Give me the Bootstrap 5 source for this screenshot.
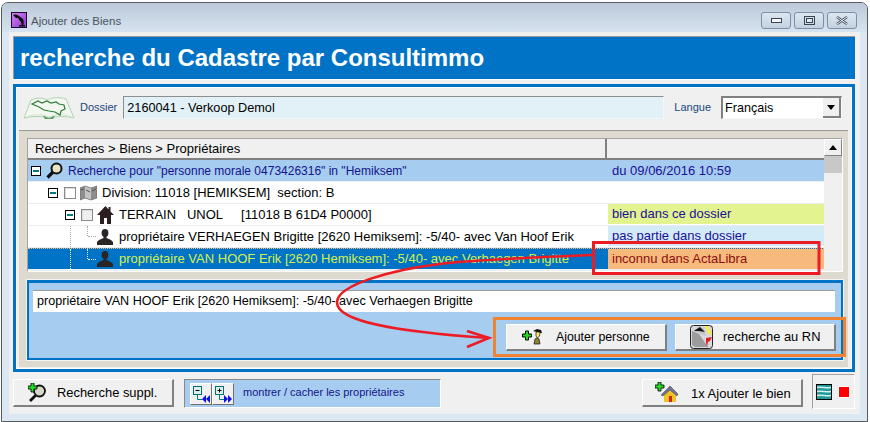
<!DOCTYPE html>
<html lang="fr"><head><meta charset="utf-8"><title>Ajouter des Biens</title>
<link href="https://cdn.jsdelivr.net/npm/bootstrap@5.3.0/dist/css/bootstrap.min.css" rel="stylesheet">
<style>
html,body{margin:0;height:422px;overflow:hidden;background:#fff}
body{font-family:"Liberation Sans",Arial,sans-serif;font-size:13px;color:#000;position:relative}
.win{margin:2px 2px 0 1px;height:420px;border:1px solid #5a5a5a;border-radius:7px 7px 0 0;background:#dbe7f3;padding:0 7px 7px 7px}
.wintitle{height:29px;margin:0 -7px;padding:0 10px 0 9px;background:linear-gradient(#bbc9d9,#d7e3f0);border-radius:6px 6px 0 0}
.wintitle .ttl{font-size:11.5px;color:#4a5560;margin:10px 0 0 4px}
.capbtn{width:30px;height:17px;border:1px solid #7d8ea5;border-radius:3px;background:linear-gradient(#dde7f1,#c3d1e0)}
.capwrap{margin-top:9px;gap:3px}
.client{height:382px;background:#f0f0f0;padding:4px 5px 0 4px}
.hdr{height:43px;background:#0073c6;border-top:1px solid #9a9a9a;border-left:1px solid #9a9a9a;color:#fff;font-size:24px;font-weight:700;padding:0 6px;line-height:42px;box-shadow:0 1px 0 #fff}
.mainp{height:288px;margin-top:5px;border:3px solid #0073c6;outline:1px solid #fff;outline-offset:-4px;background:#f0f0f0;padding:1px 4px 0 3px}
.dosrow{height:42px;padding:8px 0 11px 4px}
.lbl{font-size:11px;color:#18487c;flex:none}
.dosin{width:541px;height:23px;flex:none;background:#e2f0f8;border:1px solid #eef7fb;border-top-color:#8e8e8e;border-left-color:#8e8e8e;font-size:12.7px;line-height:23px;padding-left:3px;margin-left:6px}
.sel{width:121px;height:23px;flex:none;margin-left:10px;background:#fff;border:1px solid #808080;border-top-width:2px;border-left-width:2px;border-right-color:#f8f8f8;border-bottom-color:#f8f8f8;font-size:12.6px;line-height:21px;padding-left:2px}
.selbtn{width:18px;height:20px;background:#f0f0f0;border-right:2px solid #808080;border-bottom:2px solid #808080}
.selbtn i{border-left:4px solid transparent;border-right:4px solid transparent;border-top:5px solid #000}
.tan{height:237px;background:#dfdad0;border-top:1px solid #9a9a9a;padding:7px 5px 0 8px}
.gridbox{height:134px;background:#f0f0f0;border:1px solid #a4a4a4;border-right-color:#fff;border-bottom-color:#fff;position:relative}
.treecol{width:796px;flex:none}
.ghead{height:21px;background:#f0f0f0;border-bottom:2px solid #808080;line-height:19px;font-size:13px}
.gh1{width:579px;padding-left:7px;border-right:2px solid #808080}
.sb{width:18px;flex:none;background:#f0f0f0}
.sbup{height:17px;background:#f0f0f0;border:1px solid #fff;border-right-color:#808080;border-bottom-color:#808080}
.sbup i{border-left:4px solid transparent;border-right:4px solid transparent;border-bottom:5px solid #000}
.sbthumb{height:17px;background:#c8c8c8}
.gr{height:22px;line-height:20px;font-size:13px;border-bottom:1px solid #ececec;background:#fff;white-space:nowrap;position:relative}
.gmain{width:580px;overflow:hidden;flex:none}
.gstat{width:216px;flex:none;padding-left:4px;margin:0 1px 1px 0;height:20px;line-height:19px;color:#1a0f96;font-size:13px}
.r0{background:#a6ccf0;color:#14148c;border-bottom:0;margin-bottom:1px;height:21px}
.r0 .fs{font-size:12px}
.rsel{background:#0073c6;color:#d6f04a;border-bottom:0;height:21px;border-top:1px dotted #f7b97c}
.r0 .gstat{margin:0}
.st1{background:#e3f38f}.st2{background:#d2ebf6}.st3{background:#f7b97c;color:#8c1010}
.exp{width:10px;height:10px;border:1px solid #000;background:#fff;flex:none;position:relative}
.exp::after{content:"";position:absolute;left:1px;right:1px;top:3px;height:2px;background:#007c80}
.chk{width:12px;height:12px;border:1px solid #8a8a8a;background:#fff;flex:none;margin:0 4px 0 6px;box-shadow:inset 1px 1px 0 #ddd}
.chk2{background:#efefef}
.ind0{padding-left:3px}.ind1{padding-left:20px}.ind2{padding-left:37px}.ind3{padding-left:69px}
.ico{flex:none;margin-right:6px}
.ico5{flex:none;margin-right:5px}
.sub{height:80px;margin-top:8px;width:816px;border:2px solid #0073c6;border-top-width:3px;background:#a6ccf0;box-shadow:0 0 0 1px #f4f4f4;padding:7px 6px 0 4px}
.subin{height:22px;background:#fff;border-top:1px solid #9a9a9a;font-size:12.6px;line-height:21px;padding-left:4px}
.orange{width:353px;height:40px;margin:5px -11px 0 auto;border:3px solid #f08232;padding:4px 7px 0 10px;gap:8px}
.wb{height:27px;width:161px;flex:none;border:1px solid #fff;border-right:2px solid #808080;border-bottom:2px solid #808080;background:#f0f0f0;font-size:13px;color:#000;padding:0 0 0 14px;white-space:nowrap;line-height:1}
.wb svg{flex:none}
.wb span{padding-top:1px}
.wb .t1{font-size:12.3px;margin-left:14px}
.wb .t2{margin-left:10px;font-size:12.9px}
.foot{height:35px;padding-top:7px}
.wb.big{height:28px}
.showp{width:257px;height:29px;flex:none;margin-left:10px;background:#a6ccf0;border:1px solid #fff;border-left-color:#8a8a8a;border-top-color:#8a8a8a;font-size:11px;color:#14148c;padding-left:5px}
.mini{width:22px;height:22px;background:#f0f0f0;border:1px solid #fff;border-right:1px solid #707070;border-bottom:1px solid #707070;flex:none}
.showp .cap{margin-left:9px;margin-top:-2px}
.tiny{width:43px;height:35px;flex:none;margin:-5px 0 0 9px;border:1px solid #fff;border-left-color:#a0a0a0;border-top-color:#a0a0a0;padding-left:3px;gap:6px}
.tiny .sq{width:12px;height:12px;background:#f00;border:1px solid #fff;flex:none}
.ann{position:absolute;left:0;top:0;pointer-events:none}
.dots{position:absolute;border-left:1px dotted #a8a8a8}
.doth{position:absolute;border-top:1px dotted #a8a8a8;height:0}
.rsel .dots,.rsel .doth{border-color:#fff}
</style></head><body>
<div class="win">
 <div class="wintitle d-flex align-items-start">
  <svg width="16" height="16" viewBox="0 0 16 16" class="flex-none" style="margin-top:9px"><defs><linearGradient id="pg" x1="0" y1="0" x2="1" y2="1"><stop offset="0" stop-color="#d88cf0"/><stop offset="1" stop-color="#8a2fd0"/></linearGradient></defs><rect width="16" height="16" fill="url(#pg)"/><rect x=".5" y=".5" width="15" height="15" fill="none" stroke="#1a0a30"/><path d="M2 3c2-1 5 0 6 1l4 3c1 2 1 5 0 7l-1 1c-1-2 0-5-2-6L7 6H5z" fill="#101010"/><path d="M8 13h6v1.500H8z" fill="#101010"/></svg>
  <span class="ttl">Ajouter des Biens</span>
  <div class="ms-auto d-flex capwrap">
   <div class="capbtn d-flex align-items-center justify-content-center"><svg width="11" height="7"><rect x=".5" y="1.500" width="10" height="4" fill="#f4f6f8" stroke="#3c4652"/></svg></div>
   <div class="capbtn d-flex align-items-center justify-content-center"><svg width="11" height="9"><rect x=".5" y=".5" width="10" height="8" fill="none" stroke="#3c4652"/><rect x="2.500" y="2.500" width="6" height="4" fill="#dfe7ef" stroke="#3c4652"/></svg></div>
   <div class="capbtn d-flex align-items-center justify-content-center"><svg width="12" height="9"><path d="M1 1l10 7M11 1L1 8" stroke="#3c4652" stroke-width="2.400"/><path d="M1 1l10 7M11 1L1 8" stroke="#f0f4f8" stroke-width="1"/></svg></div>
  </div>
 </div>
 <div class="client">
  <div class="hdr">recherche du Cadastre par Consultimmo</div>
  <div class="mainp">
   <div class="dosrow d-flex align-items-center">
    <svg width="52" height="25" viewBox="0 0 52 25" class="flex-none" style="margin-right:5px"><path d="M1 23L8 5c5-2 11-3 16 0 6-3 13-3 19-1l8 19c-8-2-17-2-24 0-8-2-18-2-26 0z" fill="#f2f8f0" stroke="#b4d0b4"/><path d="M4 22c7-3 15-3 22 0 7-3 15-3 22 0" fill="none" stroke="#cfe2cf"/><path d="M9 9l6-3 4 2 5-2 4 2 5-1 3 2 5 1 1 4-4 2-1 4-5-3-6-1-5-1-5-3z" fill="#f2f8f0" stroke="#2f7d38" stroke-width="1.200"/><path d="M20 21c3 0 4 2 6 2s3-2 6-2l-2 3h-8z" fill="#5f9f66"/></svg>
    <span class="lbl">Dossier</span>
    <div class="dosin">2160041 - Verkoop Demol</div>
    <span class="lbl" style="margin-left:10px">Langue</span>
    <div class="sel d-flex justify-content-between">Français<div class="selbtn d-flex align-items-center justify-content-center"><i></i></div></div>
   </div>
   <div class="tan">
    <div class="gridbox d-flex">
     <div class="treecol">
      <div class="ghead d-flex"><div class="gh1">Recherches &gt; Biens &gt; Propriétaires</div></div>
      <div class="gr r0 d-flex align-items-center"><div class="gmain d-flex align-items-center ind0"><span class="exp" style="margin-right:5px"></span><svg width="17" height="17" viewBox="0 0 17 17" class="flex-none" style="margin-right:5px"><circle cx="10.500" cy="6.500" r="5" fill="#e9e4c4" stroke="#111" stroke-width="2"/><path d="M7 10l-5.500 5.500" stroke="#111" stroke-width="3.200"/></svg><span class="fs">Recherche pour "personne morale 0473426316" in "Hemiksem"</span></div><div class="gstat">du 09/06/2016 10:59</div></div>
      <div class="gr d-flex align-items-center"><div class="gmain d-flex align-items-center ind1"><span class="exp"></span><span class="chk"></span><svg width="17" height="16" viewBox="0 0 17 16" class="ico5"><path d="M0 3l5-2 6 2 6-2v12l-6 2-6-2-5 2z" fill="#8e8e8e"/><path d="M5 1v12l6 2V3z" fill="#c4c4c4"/><path d="M1 5l3-1M12 6l4-2M6 5l4 2" stroke="#4e4e4e"/><path d="M0 3l5-2 6 2 6-2v12l-6 2-6-2-5 2z" fill="none" stroke="#5a5a5a" stroke-width=".6"/></svg><span>Division: 11018 [HEMIKSEM]&nbsp; section: B</span></div></div>
      <div class="gr d-flex align-items-center"><div class="gmain d-flex align-items-center ind2"><span class="exp"></span><span class="chk chk2"></span><svg width="17" height="18" viewBox="0 0 17 18" class="ico5"><path d="M8.500 0L0 9h3v9h4v-6h3v6h4V9h3l-3.500-3.500V1h-2v2.500z" fill="#2a1e1e"/></svg><span>TERRAIN&nbsp;&nbsp; UNOL&nbsp;&nbsp;&nbsp;&nbsp; [11018 B 61D4 P0000]</span></div><div class="gstat st1">bien dans ce dossier</div></div>
      <div class="gr d-flex align-items-center"><span class="dots" style="left:42px;top:0;height:21px"></span><span class="dots" style="left:59px;top:0;height:10px"></span><span class="doth" style="left:60px;top:10px;width:8px"></span><div class="gmain d-flex align-items-center ind3"><svg width="16" height="16" viewBox="0 0 16 16" class="ico"><ellipse cx="8" cy="4" rx="3.400" ry="4" fill="#2a2626"/><path d="M6.500 7h3v2l4.500 2 2 2v3H0v-3l2-2 4.500-2z" fill="#2a2626"/></svg><span>propriétaire VERHAEGEN Brigitte [2620 Hemiksem]: -5/40- avec Van Hoof Erik</span></div><div class="gstat st2">pas partie dans dossier</div></div>
      <div class="gr rsel d-flex align-items-center"><span class="dots" style="left:42px;top:0;height:20px"></span><span class="dots" style="left:59px;top:0;height:10px"></span><span class="doth" style="left:60px;top:10px;width:8px"></span><div class="gmain d-flex align-items-center ind3"><svg width="16" height="16" viewBox="0 0 16 16" class="ico"><ellipse cx="8" cy="4" rx="3.400" ry="4" fill="#2a2626"/><path d="M6.500 7h3v2l4.500 2 2 2v3H0v-3l2-2 4.500-2z" fill="#2a2626"/></svg><span>propriétaire VAN HOOF Erik [2620 Hemiksem]: -5/40- avec Verhaegen Brigitte</span></div><div class="gstat st3">inconnu dans ActaLibra</div></div>
     </div>
     <div class="sb"><div class="sbup d-flex align-items-center justify-content-center"><i></i></div><div class="sbthumb"></div></div>
    </div>
    <div class="sub">
     <div class="subin">propriétaire VAN HOOF Erik [2620 Hemiksem]: -5/40- avec Verhaegen Brigitte</div>
     <div class="orange d-flex">
      <button class="wb d-flex align-items-center" style="padding-left:15px"><svg width="20" height="16" viewBox="0 0 20 16"><path d="M3.500 2h3v3h3v3h-3v3h-3V8h-3V5h3z" fill="#22d822" stroke="#000"/><path d="M11 2l4-2 4 1 1 3-3 0-2-1z" fill="#111"/><path d="M14 3h4l-.5 4-2 2-1.500-2z" fill="#f4ec6a" stroke="#111" stroke-width=".7"/><path d="M12 15l1-5 2-1 2 1 1 5z" fill="#8a8430" stroke="#111" stroke-width=".7"/></svg><span class="t1">Ajouter personne</span></button>
      <button class="wb d-flex align-items-center"><svg width="23" height="24" viewBox="0 0 23 24"><rect x=".5" y=".5" width="22" height="23" rx="3" fill="#d8d8e0" stroke="#222"/><path d="M2 6l7 3 9 13H5l-3-2z" fill="#9c9c9c"/><path d="M3 6l6-5 5 3 2 7z" fill="#c4c4c4"/><path d="M4 6l6-4 5 5-6-1z" fill="#111"/><path d="M15 1h3l4 9-4-1z" fill="#f6ee3a"/><path d="M16 13l6-1-2 4-2 1-1 5-1-5z" fill="#e02020"/></svg><span class="t2">recherche au RN</span></button>
     </div>
    </div>
   </div>
  </div>
  <div class="foot d-flex">
   <button class="wb big d-flex align-items-center"><svg width="19" height="19" viewBox="0 0 19 19"><circle cx="11.500" cy="8" r="5.500" fill="#d8d8c8" stroke="#111" stroke-width="1.800"/><path d="M7.500 12.500L2 18" stroke="#111" stroke-width="2.800"/><path d="M3 0h3v3h3v3H6v3H3V6H0V3h3z" fill="#22d822" stroke="#000" stroke-width=".8"/></svg><span class="t2">Recherche suppl.</span></button>
   <div class="showp d-flex align-items-center">
    <div class="mini"><svg width="20" height="20" viewBox="0 0 20 20" class="d-block"><rect x="2.500" y="2.500" width="8" height="8" fill="#dff0e8" stroke="#007078"/><path d="M4.500 6.500h4" stroke="#000"/><path d="M6.500 10.500v5h5" fill="none" stroke="#007c80"/><path d="M11 15l4-4v8zM15 15l4-4v8z" fill="#1010e0"/></svg></div>
    <div class="mini"><svg width="20" height="20" viewBox="0 0 20 20" class="d-block"><rect x="2.500" y="2.500" width="8" height="8" fill="#dff0e8" stroke="#007078"/><path d="M4.500 6.500h4M6.500 4.500v4" stroke="#000"/><path d="M6.500 10.500v5h5" fill="none" stroke="#007c80"/><path d="M11 11l4 4-4 4zM15 11l4 4-4 4z" fill="#1010e0"/></svg></div>
    <span class="cap">montrer / cacher les propriétaires</span>
   </div>
   <button class="wb big d-flex align-items-center ms-auto" style="padding-left:12px"><svg width="24" height="22" viewBox="0 0 24 22"><path d="M9 12l6-5 6 5v8H9z" fill="#f0c428"/><path d="M6 13l9-9 8 8-1 2-7-6-7 6z" fill="#70709a" stroke="#444" stroke-width=".5"/><rect x="14" y="14" width="3" height="6" fill="#d82020"/><path d="M3 0h3v3h3v3H6v3H3V6H0V3h3z" fill="#22d822" stroke="#000" stroke-width=".8"/></svg><span style="margin-left:12px">1x Ajouter le bien</span></button>
   <div class="tiny d-flex align-items-center"><svg width="16" height="16" viewBox="0 0 16 16" class="flex-none"><rect x=".5" y=".5" width="15" height="15" fill="#1f9a9a" stroke="#000"/><path d="M1 3.500c4-1 10 1 14 0M1 7.500c4-1 10 1 14 0M1 11.500c4-1 10 1 14 0" fill="none" stroke="#d4f0f0" stroke-width="1.400"/></svg><span class="sq"></span></div>
  </div>
 </div>
</div>
<svg class="ann" width="870" height="422" viewBox="0 0 870 422"><rect x="593.500" y="242.500" width="225.500" height="31" fill="none" stroke="#ed1c24" stroke-width="3"/><path d="M592 255C520 258 470 260 440 264C390 270 338 285 337 302C336 322 400 332 489 338" fill="none" stroke="#ed1c24" stroke-width="2.600"/><path d="M467 331L489 338L467 347" fill="none" stroke="#ed1c24" stroke-width="2.600"/></svg>
</body></html>
